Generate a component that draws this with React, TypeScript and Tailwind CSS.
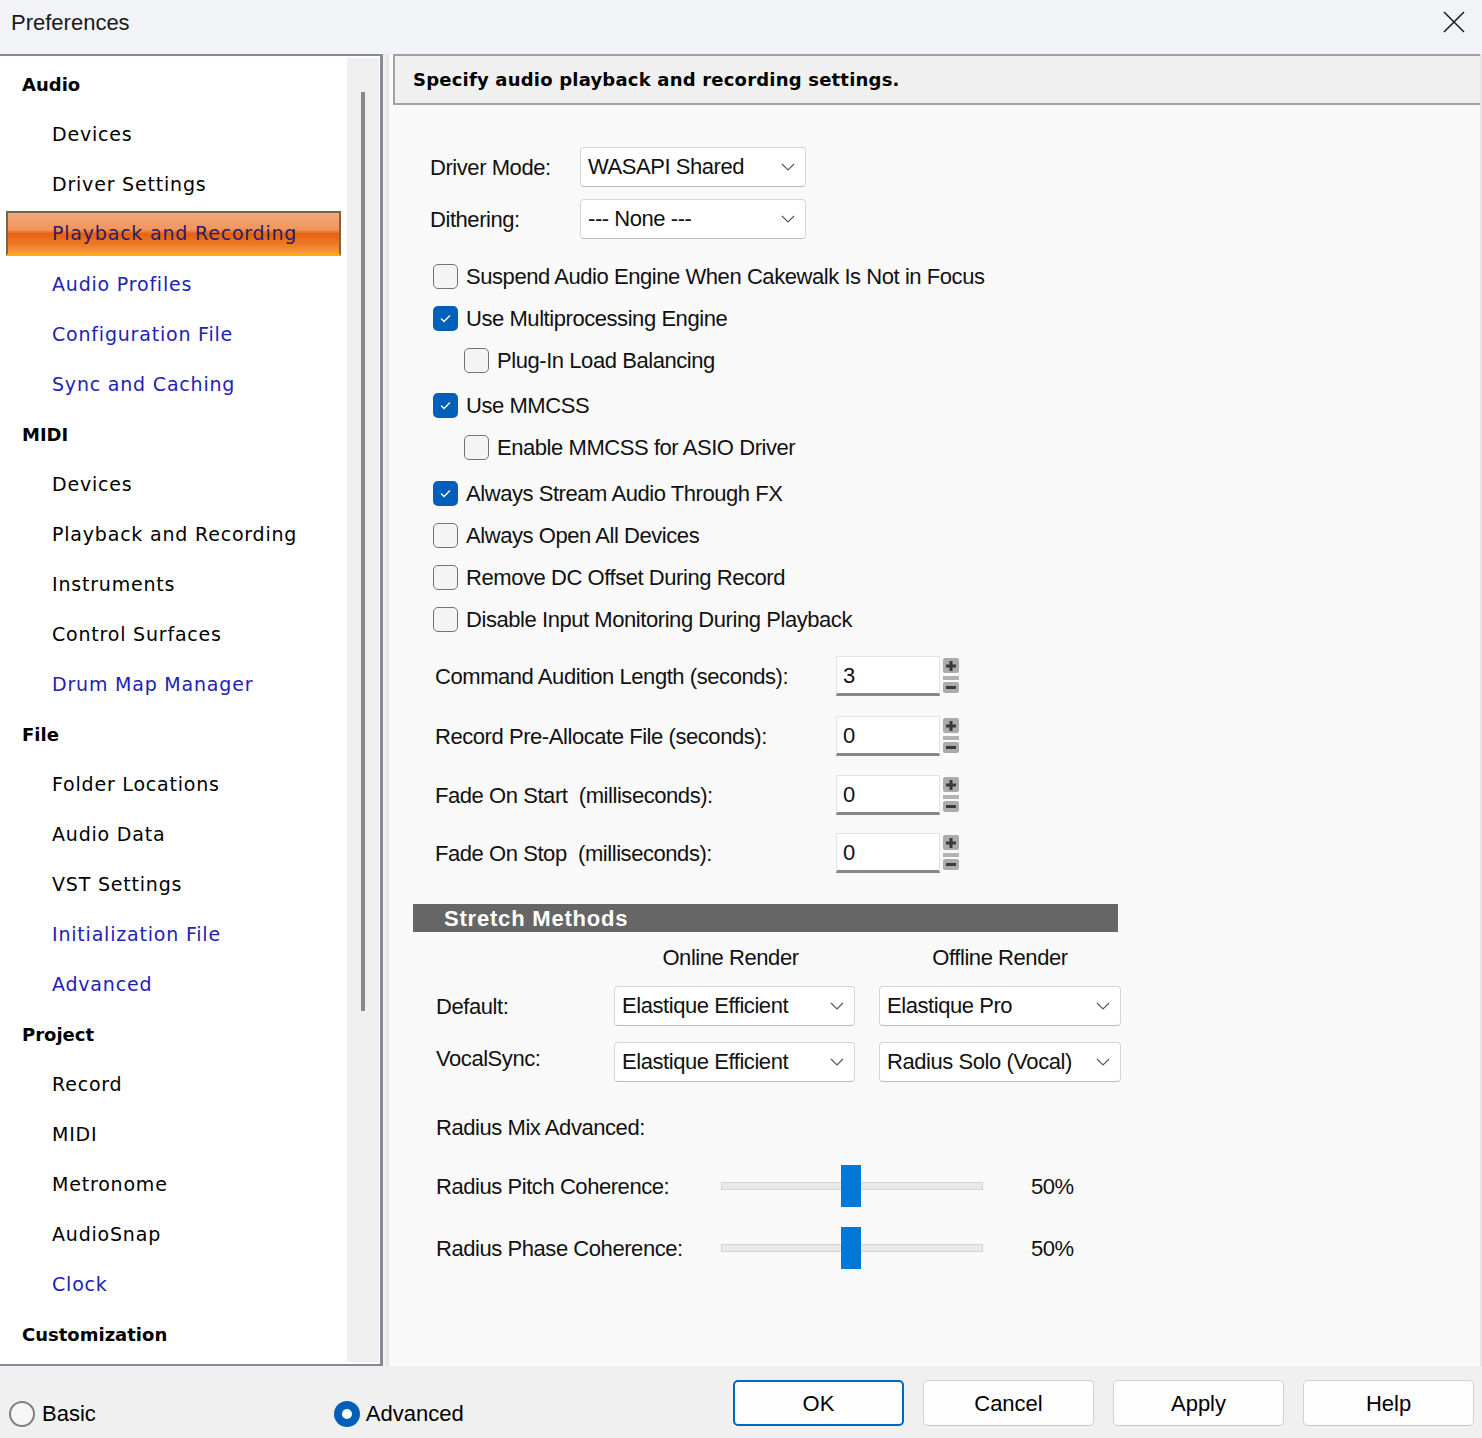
import React from 'react';

type NavKind = 'head' | 'item' | 'link' | 'selected';
type NavItem = { label: string; kind: NavKind };

// Left tree of preference pages
const nav: NavItem[] = [
  { label: 'Audio', kind: 'head' },
  { label: 'Devices', kind: 'item' },
  { label: 'Driver Settings', kind: 'item' },
  { label: 'Playback and Recording', kind: 'selected' },
  { label: 'Audio Profiles', kind: 'link' },
  { label: 'Configuration File', kind: 'link' },
  { label: 'Sync and Caching', kind: 'link' },
  { label: 'MIDI', kind: 'head' },
  { label: 'Devices', kind: 'item' },
  { label: 'Playback and Recording', kind: 'item' },
  { label: 'Instruments', kind: 'item' },
  { label: 'Control Surfaces', kind: 'item' },
  { label: 'Drum Map Manager', kind: 'link' },
  { label: 'File', kind: 'head' },
  { label: 'Folder Locations', kind: 'item' },
  { label: 'Audio Data', kind: 'item' },
  { label: 'VST Settings', kind: 'item' },
  { label: 'Initialization File', kind: 'link' },
  { label: 'Advanced', kind: 'link' },
  { label: 'Project', kind: 'head' },
  { label: 'Record', kind: 'item' },
  { label: 'MIDI', kind: 'item' },
  { label: 'Metronome', kind: 'item' },
  { label: 'AudioSnap', kind: 'item' },
  { label: 'Clock', kind: 'link' },
  { label: 'Customization', kind: 'head' },
];

const checks = [
  { label: 'Suspend Audio Engine When Cakewalk Is Not in Focus', checked: false, indent: false, mt: 'mt-[16px]' },
  { label: 'Use Multiprocessing Engine', checked: true, indent: false, mt: 'mt-0' },
  { label: 'Plug-In Load Balancing', checked: false, indent: true, mt: 'mt-0' },
  { label: 'Use MMCSS', checked: true, indent: false, mt: 'mt-[3px]' },
  { label: 'Enable MMCSS for ASIO Driver', checked: false, indent: true, mt: 'mt-0' },
  { label: 'Always Stream Audio Through FX', checked: true, indent: false, mt: 'mt-[4px]' },
  { label: 'Always Open All Devices', checked: false, indent: false, mt: 'mt-0' },
  { label: 'Remove DC Offset During Record', checked: false, indent: false, mt: 'mt-0' },
  { label: 'Disable Input Monitoring During Playback', checked: false, indent: false, mt: 'mt-0' },
];

const spins = [
  { label: 'Command Audition Length (seconds):', value: '3', mt: 'mt-[16px]' },
  { label: 'Record Pre-Allocate File (seconds):', value: '0', mt: 'mt-[20px]' },
  { label: 'Fade On Start\u00a0 (milliseconds):', value: '0', mt: 'mt-[19px]' },
  { label: 'Fade On Stop\u00a0 (milliseconds):', value: '0', mt: 'mt-[18px]' },
];

const Chevron = () => (
  <svg width="14" height="8" viewBox="0 0 14 8" fill="none">
    <polyline points="1,1 7,7 13,1" stroke="#5a5a5a" strokeWidth="1.2" />
  </svg>
);

const Select = ({ value, w }: { value: string; w: string }) => (
  <div className={`${w} h-[40px] bg-white border border-[#d6d6d6] border-b-[#bcbcbc] rounded-[4px] flex items-center justify-between pl-[7px] pr-[10px]`}>
    <span className="text-[22px] tracking-[-0.02em] text-[#111] leading-none">{value}</span>
    <Chevron />
  </div>
);

const Checkbox = ({ checked }: { checked: boolean }) =>
  checked ? (
    <div className="w-[25px] h-[25px] rounded-[5px] bg-[#005fb8] flex items-center justify-center shrink-0">
      <svg width="25" height="25" viewBox="0 0 25 25" fill="none">
        <polyline points="8,12.5 11,15.5 17,9.5" stroke="#ffffff" strokeWidth="1.3" />
      </svg>
    </div>
  ) : (
    <div className="w-[25px] h-[25px] rounded-[5px] border-[1.5px] border-[#727272] bg-[#f4f4f4] shrink-0" />
  );

const Spinner = () => (
  <div className="ml-[3px] w-[16px] flex flex-col self-start mt-[2px]">
    <div className="h-[15px] bg-[#ababab] rounded-[2px] flex items-center justify-center">
      <svg width="12" height="12" viewBox="0 0 12 12">
        <rect x="4.5" y="1" width="3" height="10" fill="#3a3a3a" />
        <rect x="1" y="4.5" width="10" height="3" fill="#3a3a3a" />
      </svg>
    </div>
    <div className="h-[4px] bg-[#b3b3b3] mt-[3px]" />
    <div className="h-[11px] bg-[#ababab] rounded-[2px] mt-[2px] flex items-center justify-center">
      <div className="w-[10px] h-[3px] bg-[#3a3a3a]" />
    </div>
  </div>
);

const Slider = () => (
  <div className="relative w-[262px] h-[42px] flex items-center">
    <div className="w-full h-[8px] bg-[#e8eaea] border border-[#d4d4d4]" />
    <div className="absolute left-[120px] top-0 w-[20px] h-[42px] bg-[#0078d7]" />
  </div>
);

function TitleBar() {
  return (
    <div className="h-[54px] bg-[#f1f3f6] flex items-center justify-between pl-[11px] pr-[17px] pb-[10px] shrink-0">
      <span className="text-[22px] text-[#1a1a1a]">Preferences</span>
      <svg width="22" height="22" viewBox="0 0 22 22" fill="none">
        <path d="M1 1 L21 21 M21 1 L1 21" stroke="#1e1e1e" strokeWidth="1.6" />
      </svg>
    </div>
  );
}

function LeftNav() {
  return (
    <div className="w-[383px] h-full bg-white border-t-2 border-r-[3px] border-b-2 border-[#868a95] flex shrink-0">
      <div className="w-[347px] pt-[3px] font-['DejaVu_Sans',sans-serif]">
        {nav.map((n, i) => {
          if (n.kind === 'head')
            return (
              <div key={i} className="h-[50px] flex items-center pl-[22px] text-[18px] font-bold text-black">
                {n.label}
              </div>
            );
          if (n.kind === 'selected')
            return (
              <div key={i} className="h-[50px] pt-[2px] px-[6px]">
                <div className="h-[45px] flex items-center pl-[44px] border-t-2 border-x-2 border-[#7b6443] border-b-[3px] border-b-[#ffae00] bg-[linear-gradient(to_bottom,#f4a87e_0%,#f29459_42%,#e5610e_52%,#ee7a27_78%,#f79b3c_100%)] text-[19px] tracking-[0.8px] text-[#2a1d66]">
                  {n.label}
                </div>
              </div>
            );
          return (
            <div
              key={i}
              className={`h-[50px] flex items-center pl-[52px] text-[19px] tracking-[0.8px] ${n.kind === 'link' ? 'text-[#2222b4]' : 'text-black'}`}
            >
              {n.label}
            </div>
          );
        })}
      </div>
      {/* scroll track */}
      <div className="w-[32px] my-[2px] bg-[#efefef] pt-[34px] pl-[14px]">
        <div className="w-[4px] h-[919px] bg-[#898989]" />
      </div>
    </div>
  );
}

function RightPanel() {
  return (
    <div className="ml-[3px] flex-1 h-[1314px] bg-[#f9f9f9] border-l-[3px] border-r-2 border-b-2 border-[#e6e6e6] flex flex-col text-[22px] tracking-[-0.02em] text-[#111]">
      <div className="ml-[4px] h-[51px] bg-[#f0f0f0] border-t-2 border-l-2 border-b-2 border-[#a2a2a2] flex items-center pl-[18px]">
        <span className="font-['DejaVu_Sans',sans-serif] font-bold text-[18px] tracking-[0.2px] text-black">
          Specify audio playback and recording settings.
        </span>
      </div>

      {/* driver */}
      <div className="mt-[42px] pl-[41px] flex items-center h-[40px]">
        <span className="w-[150px]">Driver Mode:</span>
        <Select value="WASAPI Shared" w="w-[226px]" />
      </div>
      <div className="mt-[12px] pl-[41px] flex items-center h-[40px]">
        <span className="w-[150px]">Dithering:</span>
        <Select value="--- None ---" w="w-[226px]" />
      </div>

      {/* checkboxes */}
      {checks.map((c, i) => (
        <div key={i} className={`${c.mt} h-[42px] flex items-center gap-[8px] ${c.indent ? 'pl-[75px]' : 'pl-[44px]'}`}>
          <Checkbox checked={c.checked} />
          <span>{c.label}</span>
        </div>
      ))}

      {/* spin fields */}
      {spins.map((s, i) => (
        <div key={i} className={`${s.mt} h-[40px] flex items-center pl-[46px]`}>
          <span className="w-[401px]">{s.label}</span>
          <div className="w-[104px] h-[40px] bg-white border border-[#e4e4e4] border-b-[3px] border-b-[#878787] flex items-center pl-[6px]">
            {s.value}
          </div>
          <Spinner />
        </div>
      ))}

      {/* stretch methods */}
      <div className="mt-[31px] ml-[24px] w-[705px] h-[28px] bg-[#666666] flex items-center pl-[31px]">
        <span className="text-white font-bold text-[22px] tracking-[0.8px]">Stretch Methods</span>
      </div>
      <div className="mt-[10px] h-[30px] flex items-center pl-[225px]">
        <span className="w-[241px] text-center pr-[8px]">Online Render</span>
        <span className="ml-[24px] w-[242px] text-center">Offline Render</span>
      </div>
      <div className="mt-[14px] h-[40px] flex items-center pl-[47px]">
        <span className="w-[178px]">Default:</span>
        <Select value="Elastique Efficient" w="w-[241px]" />
        <div className="ml-[24px]">
          <Select value="Elastique Pro" w="w-[242px]" />
        </div>
      </div>
      <div className="mt-[16px] h-[40px] flex items-center pl-[47px]">
        <span className="w-[178px] pb-[8px]">VocalSync:</span>
        <Select value="Elastique Efficient" w="w-[241px]" />
        <div className="ml-[24px]">
          <Select value="Radius Solo (Vocal)" w="w-[242px]" />
        </div>
      </div>

      <div className="mt-[30px] h-[30px] flex items-center pl-[47px]">Radius Mix Advanced:</div>
      <div className="mt-[23px] h-[42px] flex items-center pl-[47px]">
        <span className="w-[285px]">Radius Pitch Coherence:</span>
        <Slider />
        <span className="ml-[48px]">50%</span>
      </div>
      <div className="mt-[20px] h-[42px] flex items-center pl-[47px]">
        <span className="w-[285px]">Radius Phase Coherence:</span>
        <Slider />
        <span className="ml-[48px]">50%</span>
      </div>
    </div>
  );
}

function BottomBar() {
  return (
    <div className="flex-1 bg-[#f0f0f0] flex items-start text-[22px] text-black">
      <div className="mt-[31px] pl-[9px] flex items-center">
        <div className="w-[26px] h-[26px] rounded-full border-2 border-[#808080] bg-[#f6f6f6]" />
        <span className="ml-[7px]">Basic</span>
        <div className="ml-[238px] w-[26px] h-[26px] rounded-full bg-[#005fb8] flex items-center justify-center">
          <div className="w-[10px] h-[10px] rounded-full bg-white" />
        </div>
        <span className="ml-[6px]">Advanced</span>
      </div>
      <div className="ml-auto mr-[8px] mt-[14px] flex gap-[19px]">
        {['OK', 'Cancel', 'Apply', 'Help'].map((b) => (
          <div
            key={b}
            className={`w-[171px] h-[46px] rounded-[5px] bg-[#fdfdfd] flex items-center justify-center ${b === 'OK' ? 'border-2 border-[#0067c0]' : 'border border-[#d0d0d0] border-b-[#c2c2c2]'}`}
          >
            {b}
          </div>
        ))}
      </div>
    </div>
  );
}

export default function App() {
  return (
    <div className="w-[1482px] h-[1438px] flex flex-col bg-[#f0f0f0] overflow-hidden font-['Liberation_Sans',Arial,sans-serif]">
      <TitleBar />
      <div className="flex h-[1312px] shrink-0">
        <LeftNav />
        <RightPanel />
      </div>
      <BottomBar />
    </div>
  );
}
